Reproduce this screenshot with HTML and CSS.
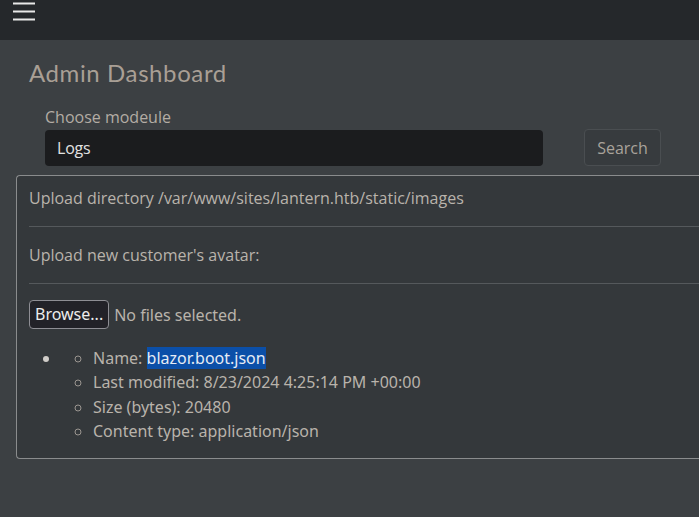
FILE: index.html
```html
<!DOCTYPE html>
<html>
<head>
<meta charset="utf-8">
<link rel="stylesheet" href="styles.css">
</head>
<body>
<header class="topbar">
  <button class="burger" aria-label="menu">
    <svg width="22" height="20" viewBox="0 0 22 20"><path d="M0 2.5H22M0 10.5H22M0 18.5H22" stroke="#e8e8e8" stroke-width="2"/></svg>
  </button>
</header>
<main class="page">
  <h1 class="title">Admin Dashboard</h1>
  <div class="search-row">
    <div class="field">
      <label class="label">Choose modeule</label>
      <div class="input">Logs</div>
    </div>
    <button class="search-btn">Search</button>
  </div>
  <section class="card">
    <div class="row">Upload directory /var/www/sites/lantern.htb/static/images</div>
    <hr class="divider">
    <div class="row">Upload new customer's avatar:</div>
    <hr class="divider">
    <div class="file-row"><span class="browse">Browse...</span><span class="nofile">No files selected.</span></div>
    <ul class="outer">
      <li>
        <ul class="inner">
          <li>Name: <span class="sel">blazor.boot.json</span></li>
          <li>Last modified: 8/23/2024 4:25:14 PM +00:00</li>
          <li>Size (bytes): 20480</li>
          <li>Content type: application/json</li>
        </ul>
      </li>
    </ul>
  </section>
</main>
</body>
</html>
```

FILE: styles.css
```css
html, body {
  margin: 0;
  padding: 0;
}
body {
  background: #3c4043;
  font-family: "Open Sans", "Noto Sans", sans-serif;
  color: #b9b3ab;
  width: 699px;
  height: 517px;
  overflow: hidden;
}
.topbar {
  height: 40px;
  background: #25282b;
  display: flex;
  align-items: flex-start;
  padding-left: 13px;
}
.burger {
  background: none;
  border: 0;
  padding: 0;
  margin: 0;
  height: 21px;
  display: block;
}
.burger svg { display: block; }
.page {
  padding: 17px 0 0 16px;
}
.title {
  margin: 0 0 0 13px;
  font-family: "Lato", "Open Sans", sans-serif;
  font-weight: 400;
  font-size: 24px;
  line-height: 32px;
  color: #a99f95;
  letter-spacing: 0.6px;
}
.search-row {
  display: flex;
  align-items: flex-end;
  margin-top: 18px;
  padding-left: 29px;
  gap: 41px;
}
.field {
  display: flex;
  flex-direction: column;
}
.label {
  font-size: 16px;
  line-height: 20px;
  color: #b3aca4;
  margin-bottom: 3px;
}
.input {
  width: 498px;
  height: 36px;
  box-sizing: border-box;
  background: #1b1c1e;
  border-radius: 4px;
  padding: 0 12px;
  font-size: 16px;
  line-height: 36px;
  color: #e2e2e2;
  letter-spacing: -0.2px;
}
.search-btn {
  width: 77px;
  height: 37px;
  box-sizing: border-box;
  background: #373b3e;
  border: 1px solid #4a4e51;
  border-radius: 4px;
  font-family: "Open Sans", sans-serif;
  font-size: 16px;
  color: #a9a39b;
  padding: 0;
  margin-bottom: 0;
}
.card {
  margin-top: 9px;
  border: 1px solid #8a8c8d;
  border-right: 0;
  border-radius: 4px 0 0 4px;
  background: #34383b;
  padding: 0 0 8px 12px;
  height: 284px;
  box-sizing: border-box;
}
.row {
  font-size: 16px;
  line-height: 20px;
  padding: 12px 0 0;
  height: 38px;
  box-sizing: border-box;
  color: #b9b3ab;
}
.divider {
  border: 0;
  border-top: 1px solid #55595c;
  margin: 12px 0 6px;
}
.file-row {
  display: flex;
  align-items: center;
  margin-top: 16px;
  font-family: "Noto Sans", sans-serif;
  font-size: 16px;
}
.browse {
  display: inline-block;
  background: #222228;
  border: 1px solid #8e8e94;
  border-radius: 4px;
  color: #ececec;
  padding: 0 5px;
  height: 29px;
  line-height: 27px;
  box-sizing: border-box;
}
.nofile {
  margin-left: 5px;
  color: #b9b3ab;
}
.outer {
  margin: 17px 0 0;
  padding-left: 32px;
  list-style: disc;
  font-family: "Noto Sans", sans-serif;
  font-size: 16px;
  color: #b9b3ab;
}
.outer > li::marker { color: #d0cdc9; }
.inner {
  list-style: circle;
  padding-left: 32px;
  margin: 0;
}
.inner li {
  line-height: 24.3px;
}
.inner li::marker { color: #9a9590; }
.sel {
  background: #0b4fa8;
  color: #e6ecf5;
}
```
